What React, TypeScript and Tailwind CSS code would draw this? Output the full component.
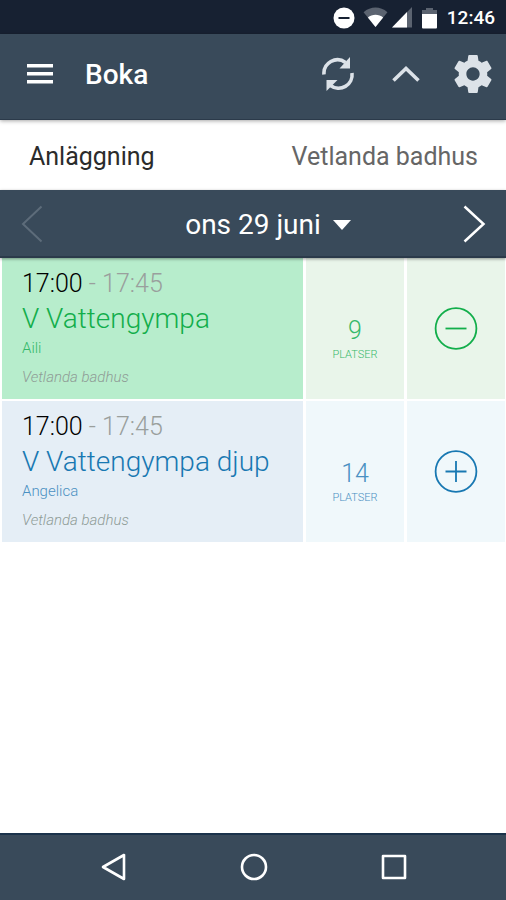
type Session = {
  start: string;
  end: string;
  title: string;
  leader: string;
  place: string;
  seats: number;
  booked: boolean;
};

const sessions: Session[] = [
  { start: "17:00", end: "17:45", title: "V Vattengympa", leader: "Aili", place: "Vetlanda badhus", seats: 9, booked: true },
  { start: "17:00", end: "17:45", title: "V Vattengympa djup", leader: "Angelica", place: "Vetlanda badhus", seats: 14, booked: false },
];

function StatusBar() {
  return (
    <div className="flex h-[34px] items-center justify-end bg-[#172132] pt-px pr-[11px] text-white">
      <svg width="22" height="22" viewBox="0 0 22 22" className="mr-2">
        <circle cx="11" cy="11" r="10.5" fill="#fff" />
        <rect x="5.5" y="10" width="11" height="2" fill="#172132" />
      </svg>
      <svg width="25" height="21" viewBox="0 0 26 22" className="mr-1">
        <path d="M0.5 5.5C8-1 18-1 25.5 5.5L13 21Z" fill="#5b6370" />
        <path d="M5 11C9.500 7 16.500 7 21 11L13 21Z" fill="#fff" />
      </svg>
      <svg width="20" height="21" viewBox="0 0 20 21" className="mr-2.5">
        <path d="M0 20.500L20 0V20.500Z" fill="#5b6370" />
        <path d="M0 20.500L15 5.100V20.500Z" fill="#fff" />
      </svg>
      <svg width="15" height="22" viewBox="0 0 15 22" className="mr-2.5">
        <path d="M4 1H11V3H15V7H0V3H4Z" fill="#5b6370" />
        <path d="M0 7H15V20.500Q15 21.500 14 21.500H1Q0 21.500 0 20.500Z" fill="#fff" />
      </svg>
      <span className="text-[19px] leading-8 font-medium">12:46</span>
    </div>
  );
}

function AppBar() {
  return (
    <header className="relative z-10 flex h-[86px] items-center border-b border-[#2b3a4a] bg-[#394a5a] pr-3.5 pb-1.5 pl-[27px] text-white shadow-[0_1px_4px_rgba(0,0,0,0.35)]">
      <button type="button" aria-label="Meny" className="mr-8">
        <svg width="26" height="20" viewBox="0 0 26 20" fill="#fff" className="block">
          <rect width="26" height="3.500" />
          <rect y="8" width="26" height="3.500" />
          <rect y="16" width="26" height="3.500" />
        </svg>
      </button>
      <h1 className="flex-1 pt-0.5 text-[28px] leading-8 font-medium">Boka</h1>
      <button type="button" aria-label="Uppdatera" className="mr-[37px]">
        <svg width="34" height="36" viewBox="0 0 34 36" className="block" fill="none" stroke="#dce2e8" strokeWidth="3.600">
          <path d="M3 18.500A13.500 13.500 0 0 1 24.500 6.500" />
          <path d="M31 17A13.500 13.500 0 0 1 9.500 29.500" />
          <path d="M18.500 12.500L29 1V12.500Z" fill="#dce2e8" stroke="none" />
          <path d="M5.500 35V24H16.500Z" fill="#dce2e8" stroke="none" />
        </svg>
      </button>
      <button type="button" aria-label="Visa mindre" className="mr-[34px]">
        <svg width="28" height="18" viewBox="0 0 28 18" className="block" fill="none" stroke="#dce2e8" strokeWidth="3.600">
          <path d="M1.500 15.500L14 3.500L26.500 15.500" />
        </svg>
      </button>
      <button type="button" aria-label="Inställningar">
        <svg width="38" height="38" viewBox="2.200 2 19.600 20" className="block" fill="#dce2e8">
          <path d="M19.430 12.980c.04-.32.07-.64.07-.98s-.03-.66-.07-.98l2.110-1.650c.19-.15.24-.42.12-.64l-2-3.460c-.12-.22-.39-.3-.61-.22l-2.490 1c-.52-.4-1.080-.73-1.690-.98l-.38-2.650C14.460 2.180 14.250 2 14 2h-4c-.25 0-.46.18-.49.42l-.38 2.650c-.61.25-1.170.59-1.690.98l-2.490-1c-.23-.09-.49 0-.61.22l-2 3.460c-.13.22-.07.49.12.64l2.110 1.650c-.04.32-.07.65-.07.98s.03.66.07.98l-2.110 1.650c-.19.15-.24.42-.12.64l2 3.460c.12.22.39.3.61.22l2.490-1c.52.4 1.080.73 1.690.98l.38 2.650c.03.24.24.42.49.42h4c.25 0 .46-.18.49-.42l.38-2.650c.61-.25 1.170-.59 1.690-.98l2.490 1c.23.09.49 0 .61-.22l2-3.460c.12-.22.07-.49-.12-.64l-2.110-1.650zM12 15.500c-1.930 0-3.500-1.570-3.500-3.500s1.570-3.500 3.500-3.500 3.500 1.570 3.500 3.500-1.570 3.500-3.500 3.500z" />
        </svg>
      </button>
    </header>
  );
}

function DateBar() {
  return (
    <div className="relative z-10 flex h-[68px] items-center justify-between border-b-2 border-[#2b3a4a] bg-[#394a5a] px-5 pt-0.5 text-white shadow-[0_1px_3px_rgba(0,0,0,0.4)]">
      <button type="button" aria-label="Föregående dag" disabled>
        <svg width="24" height="38" viewBox="0 0 24 38" className="block" fill="none" stroke="#5d6c7a" strokeWidth="2">
          <path d="M21.500 1.500L3 19L21.500 36.500" />
        </svg>
      </button>
      <button type="button" className="flex items-center gap-3 pt-0.5 pl-[30px] text-[28px] leading-8">
        ons 29 juni
        <svg width="18" height="11" viewBox="0 0 18 11" fill="#fff">
          <path d="M0 0H18L9 10Z" />
        </svg>
      </button>
      <button type="button" aria-label="Nästa dag">
        <svg width="24" height="38" viewBox="0 0 24 38" className="block" fill="none" stroke="#fff" strokeWidth="2.500">
          <path d="M2.500 1.500L21.500 19L2.500 36.500" />
        </svg>
      </button>
    </div>
  );
}

function SessionRow({ s }: { s: Session }) {
  const main = s.booked ? "bg-[#b7edcc]" : "bg-[#e5eef6]";
  const side = s.booked ? "bg-[#e9f5ea]" : "bg-[#f0f8fb]";
  const strong = s.booked ? "text-[#12ae4b]" : "text-[#1878b2]";
  const soft = s.booked ? "text-[#35b96b]" : "text-[#4a90c2]";
  return (
    <li className="flex gap-[3px]">
      <div className={`min-w-0 flex-1 pt-2.5 pb-3 pl-5 ${main}`}>
        <p className="text-[25px] leading-8 font-light text-[#9a9f9d]">
          <span className="text-black">{s.start}</span> - {s.end}
        </p>
        <h2 className={`text-[28px] leading-[38px] font-light ${strong}`}>{s.title}</h2>
        <p className={`text-[15px] leading-5 font-light ${soft}`}>{s.leader}</p>
        <p className="mt-[9px] text-[15px] leading-5 font-light text-[#8f9c96] italic">{s.place}</p>
      </div>
      <div className={`flex w-[98px] flex-col items-center justify-center gap-0.5 pt-[22px] font-light ${side} ${soft}`}>
        <span className="text-[25px] leading-7">{s.seats}</span>
        <span className="text-[11px] leading-4">PLATSER</span>
      </div>
      <div className={`flex w-[98px] items-center justify-center ${side}`}>
        <button type="button" aria-label={s.booked ? "Avboka" : "Boka"} className={strong}>
          <svg width="44" height="44" viewBox="0 0 44 44" className="block" fill="none" stroke="currentColor" strokeWidth="1.800">
            <circle cx="22" cy="21.500" r="20.400" />
            <path d={s.booked ? "M11.500 21.500H32.500" : "M11.500 21.500H32.500M22 11V32"} />
          </svg>
        </button>
      </div>
    </li>
  );
}

function SystemNav() {
  return (
    <nav className="flex h-[67px] items-center justify-center gap-28 border-t-2 border-[#1b334b] bg-[#394a5a] pb-0.5 pl-px">
      <button type="button" aria-label="Tillbaka">
        <svg width="28" height="28" viewBox="0 0 28 28" className="block" fill="none" stroke="#fff" strokeWidth="2.600" strokeLinejoin="round">
          <path d="M24 2V26L3 14Z" />
        </svg>
      </button>
      <button type="button" aria-label="Hem">
        <svg width="28" height="28" viewBox="0 0 28 28" className="block" fill="none" stroke="#fff" strokeWidth="2.600">
          <circle cx="14" cy="14" r="12" />
        </svg>
      </button>
      <button type="button" aria-label="Översikt">
        <svg width="28" height="28" viewBox="0 0 28 28" className="block" fill="none" stroke="#fff" strokeWidth="2.600" strokeLinejoin="round">
          <rect x="3" y="3" width="22" height="22" />
        </svg>
      </button>
    </nav>
  );
}

export default function App() {
  return (
    <div className="flex min-h-screen flex-col bg-white font-['Roboto',sans-serif]">
      <StatusBar />
      <AppBar />
      <button type="button" className="flex h-[70px] items-center justify-between pt-1 pr-7 pl-[29px] text-[25px] leading-8">
        <span className="text-[#2b2b2b]">Anläggning</span>
        <span className="text-[#666666]">Vetlanda badhus</span>
      </button>
      <DateBar />
      <ul className="flex flex-1 flex-col gap-0.5 pr-px pl-0.5">
        {sessions.map((s) => (
          <SessionRow key={s.title} s={s} />
        ))}
      </ul>
      <SystemNav />
    </div>
  );
}
